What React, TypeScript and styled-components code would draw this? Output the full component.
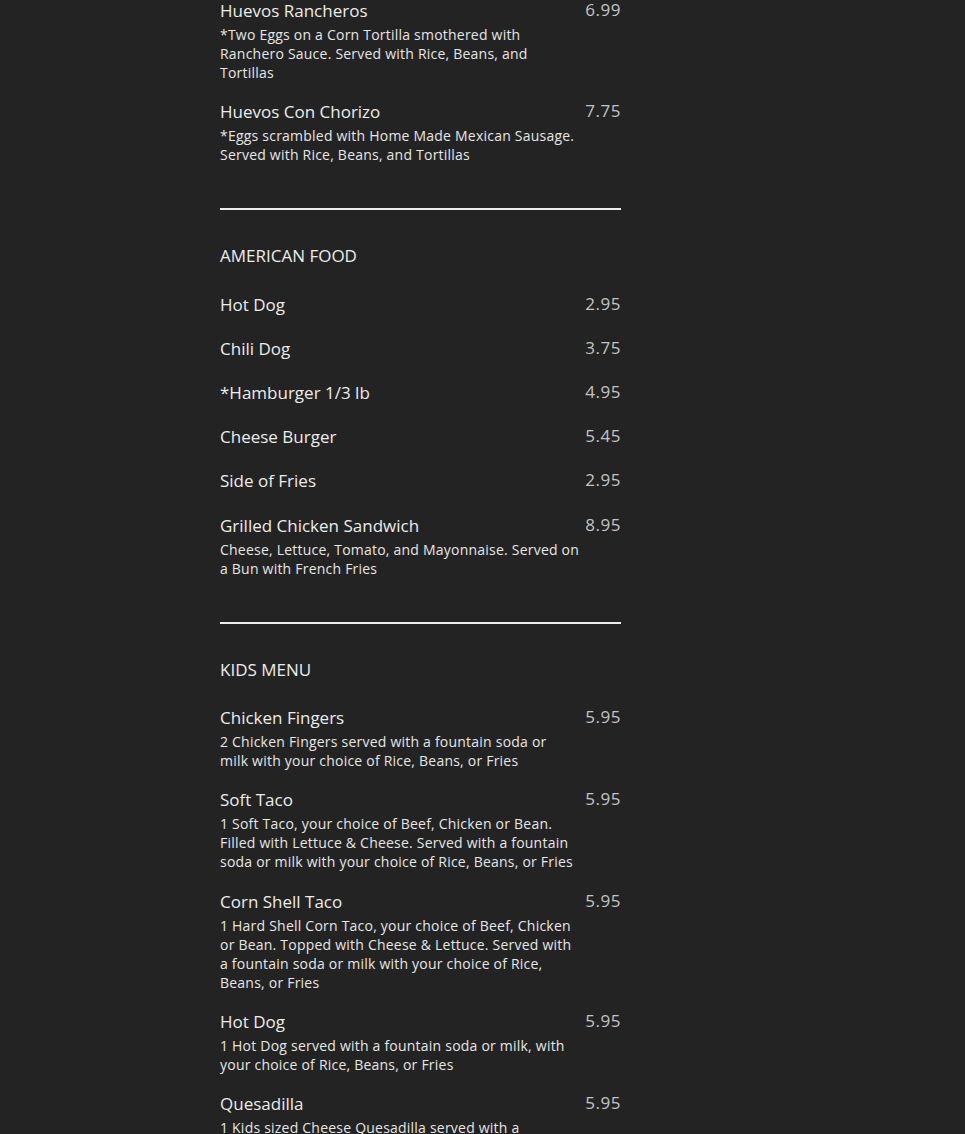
import styled, { createGlobalStyle } from 'styled-components';

const GlobalStyle = createGlobalStyle`
  html, body {
    margin: 0;
    padding: 0;
    background: #232323;
  }
  body {
    font-family: 'Open Sans', 'Noto Sans', sans-serif;
    color: #ececec;
    overflow: hidden;
  }
`;

const Page = styled.main`
  min-height: 1134px;
  padding: 0 0 0 220px;
  background: #232323;
`;

const Menu = styled.div`
  width: 401px;
  margin-top: -1px;
  display: flex;
  flex-direction: column;
`;

const Section = styled.section`
  display: flex;
  flex-direction: column;
  gap: 18.2px;
`;

const Heading = styled.h2`
  margin: 34px 0 24.5px;
  font-size: 17px;
  font-weight: 400;
  line-height: 24px;
  color: #ececec;
`;

const Divider = styled.hr`
  margin: 44px 0 0;
  border: 0;
  height: 2px;
  background: #ededed;
`;

const Item = styled.article`
  display: flex;
  justify-content: space-between;
  align-items: flex-start;
`;

const Info = styled.div`
  width: 362px;
  display: flex;
  flex-direction: column;
`;

const Name = styled.div`
  font-size: 17px;
  line-height: 24px;
  margin-bottom: 2px;
  color: #ececec;
`;

const Desc = styled.p`
  margin: 0;
  font-size: 14px;
  line-height: 19px;
  letter-spacing: 0.22px;
  white-space: pre-line;
  color: #e6e6e6;
`;

const Price = styled.div`
  font-size: 17px;
  line-height: 24px;
  letter-spacing: 0.5px;
  margin-top: -1px;
  color: #c4c4c4;
`;

type Dish = { name: string; price: string; desc?: string };

const breakfast: Dish[] = [
  {
    name: 'Huevos Rancheros',
    price: '6.99',
    desc: '*Two Eggs on a Corn Tortilla smothered with\nRanchero Sauce. Served with Rice, Beans, and\nTortillas',
  },
  {
    name: 'Huevos Con Chorizo',
    price: '7.75',
    desc: '*Eggs scrambled with Home Made Mexican Sausage.\nServed with Rice, Beans, and Tortillas',
  },
];

const american: Dish[] = [
  { name: 'Hot Dog', price: '2.95' },
  { name: 'Chili Dog', price: '3.75' },
  { name: '*Hamburger 1/3 lb', price: '4.95' },
  { name: 'Cheese Burger', price: '5.45' },
  { name: 'Side of Fries', price: '2.95' },
  {
    name: 'Grilled Chicken Sandwich',
    price: '8.95',
    desc: 'Cheese, Lettuce, Tomato, and Mayonnaise. Served on\na Bun with French Fries',
  },
];

const kids: Dish[] = [
  {
    name: 'Chicken Fingers',
    price: '5.95',
    desc: '2 Chicken Fingers served with a fountain soda or\nmilk with your choice of Rice, Beans, or Fries',
  },
  {
    name: 'Soft Taco',
    price: '5.95',
    desc: '1 Soft Taco, your choice of Beef, Chicken or Bean.\nFilled with Lettuce & Cheese. Served with a fountain\nsoda or milk with your choice of Rice, Beans, or Fries',
  },
  {
    name: 'Corn Shell Taco',
    price: '5.95',
    desc: '1 Hard Shell Corn Taco, your choice of Beef, Chicken\nor Bean. Topped with Cheese & Lettuce. Served with\na fountain soda or milk with your choice of Rice,\nBeans, or Fries',
  },
  {
    name: 'Hot Dog',
    price: '5.95',
    desc: '1 Hot Dog served with a fountain soda or milk, with\nyour choice of Rice, Beans, or Fries',
  },
  {
    name: 'Quesadilla',
    price: '5.95',
    desc: '1 Kids sized Cheese Quesadilla served with a\nfountain soda or milk, with your choice of Rice,\nBeans, or Fries',
  },
];

function MenuItem({ name, price, desc }: Dish) {
  return (
    <Item>
      <Info>
        <Name>{name}</Name>
        {desc && <Desc>{desc}</Desc>}
      </Info>
      <Price>{price}</Price>
    </Item>
  );
}

export default function App() {
  return (
    <Page>
      <GlobalStyle />
      <Menu>
        <Section>
          {breakfast.map((d) => (
            <MenuItem key={d.name} {...d} />
          ))}
        </Section>
        <Divider />
        <Heading>AMERICAN FOOD</Heading>
        <Section>
          {american.map((d) => (
            <MenuItem key={d.name} {...d} />
          ))}
        </Section>
        <Divider />
        <Heading>KIDS MENU</Heading>
        <Section>
          {kids.map((d) => (
            <MenuItem key={d.name} {...d} />
          ))}
        </Section>
      </Menu>
    </Page>
  );
}
